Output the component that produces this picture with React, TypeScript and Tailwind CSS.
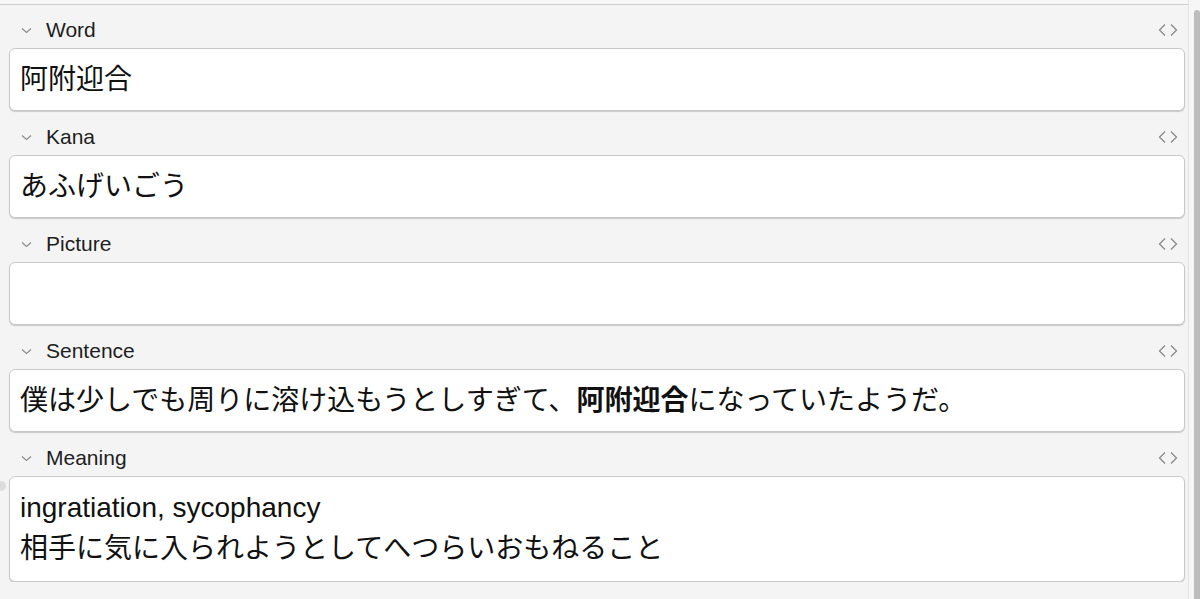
import React from 'react';

type Field = {
  name: string;
  lines: React.ReactNode[];
};

const fields: Field[] = [
  { name: 'Word', lines: ['阿附迎合'] },
  { name: 'Kana', lines: ['あふげいごう'] },
  { name: 'Picture', lines: [''] },
  {
    name: 'Sentence',
    lines: [
      <>
        僕は少しでも周りに溶け込もうとしすぎて、<b className="font-bold">阿附迎合</b>
        になっていたようだ。
      </>,
    ],
  },
  {
    name: 'Meaning',
    lines: ['ingratiation, sycophancy', '相手に気に入られようとしてへつらいおもねること'],
  },
];

const font = "font-['Liberation_Sans','Noto_Sans_CJK_JP',sans-serif]";

function ChevronDown() {
  return (
    <svg width="11" height="7" viewBox="0 0 11 7" className="shrink-0">
      <path d="M1 1.5 L5.5 5.5 L10 1.5" fill="none" stroke="#8c8c8c" strokeWidth="1.2" />
    </svg>
  );
}

function CodeToggle() {
  return (
    <svg width="20" height="14" viewBox="0 0 20 14">
      <path d="M7 1.5 L1.5 7 L7 12.5" fill="none" stroke="#8a8a8a" strokeWidth="1.3" />
      <path d="M13 1.5 L18.5 7 L13 12.5" fill="none" stroke="#8a8a8a" strokeWidth="1.3" />
    </svg>
  );
}

function FieldRow({ field }: { field: Field }) {
  const multi = field.lines.length > 1;
  return (
    <div className="flex flex-col">
      <div className="flex h-[36px] items-center pr-[10px]">
        <div className="flex w-[46px] justify-end pr-[14px]">
          <ChevronDown />
        </div>
        <span className="flex-1 text-[21px] text-[#1e1e1e]">{field.name}</span>
        <CodeToggle />
      </div>
      <div
        className={`relative ml-[9px] mr-[3px] rounded-[6px] border border-[#c9c9c9] bg-white px-[10px] pt-[10px] text-[28px] leading-[41px] text-[#111] shadow-[0_1px_1px_rgba(0,0,0,0.18)] ${
          multi ? 'pb-[12px]' : 'pb-[10px]'
        }`}
      >
        {field.lines.map((line, i) => (
          <div key={i} className="min-h-[41px] whitespace-nowrap">
            {line}
          </div>
        ))}
        {field.name === 'Meaning' && (
          <span className="absolute left-[-14px] top-[4px] h-[10px] w-[10px] rounded-full bg-[#dcdcdc]" />
        )}
      </div>
    </div>
  );
}

export default function App() {
  return (
    <div className={`flex h-screen w-full overflow-hidden bg-[#f4f4f4] ${font}`}>
      <div className="min-w-0 flex-1">
        <div className="h-[4px] bg-[#f7f7f7]" />
        <div className="flex flex-col gap-[8px] overflow-hidden border-t border-[#cfcfcf] pt-[7px]">
          {fields.map((f) => (
            <FieldRow key={f.name} field={f} />
          ))}
        </div>
      </div>
      <div className="flex w-[12px] shrink-0 flex-col border-l border-[#e3e3e3] bg-[#f6f6f6] pl-[5px] pt-[10px]">
        <div className="w-[6px] flex-1 rounded-t-[4px] bg-[#bdbdbd]" />
      </div>
    </div>
  );
}
